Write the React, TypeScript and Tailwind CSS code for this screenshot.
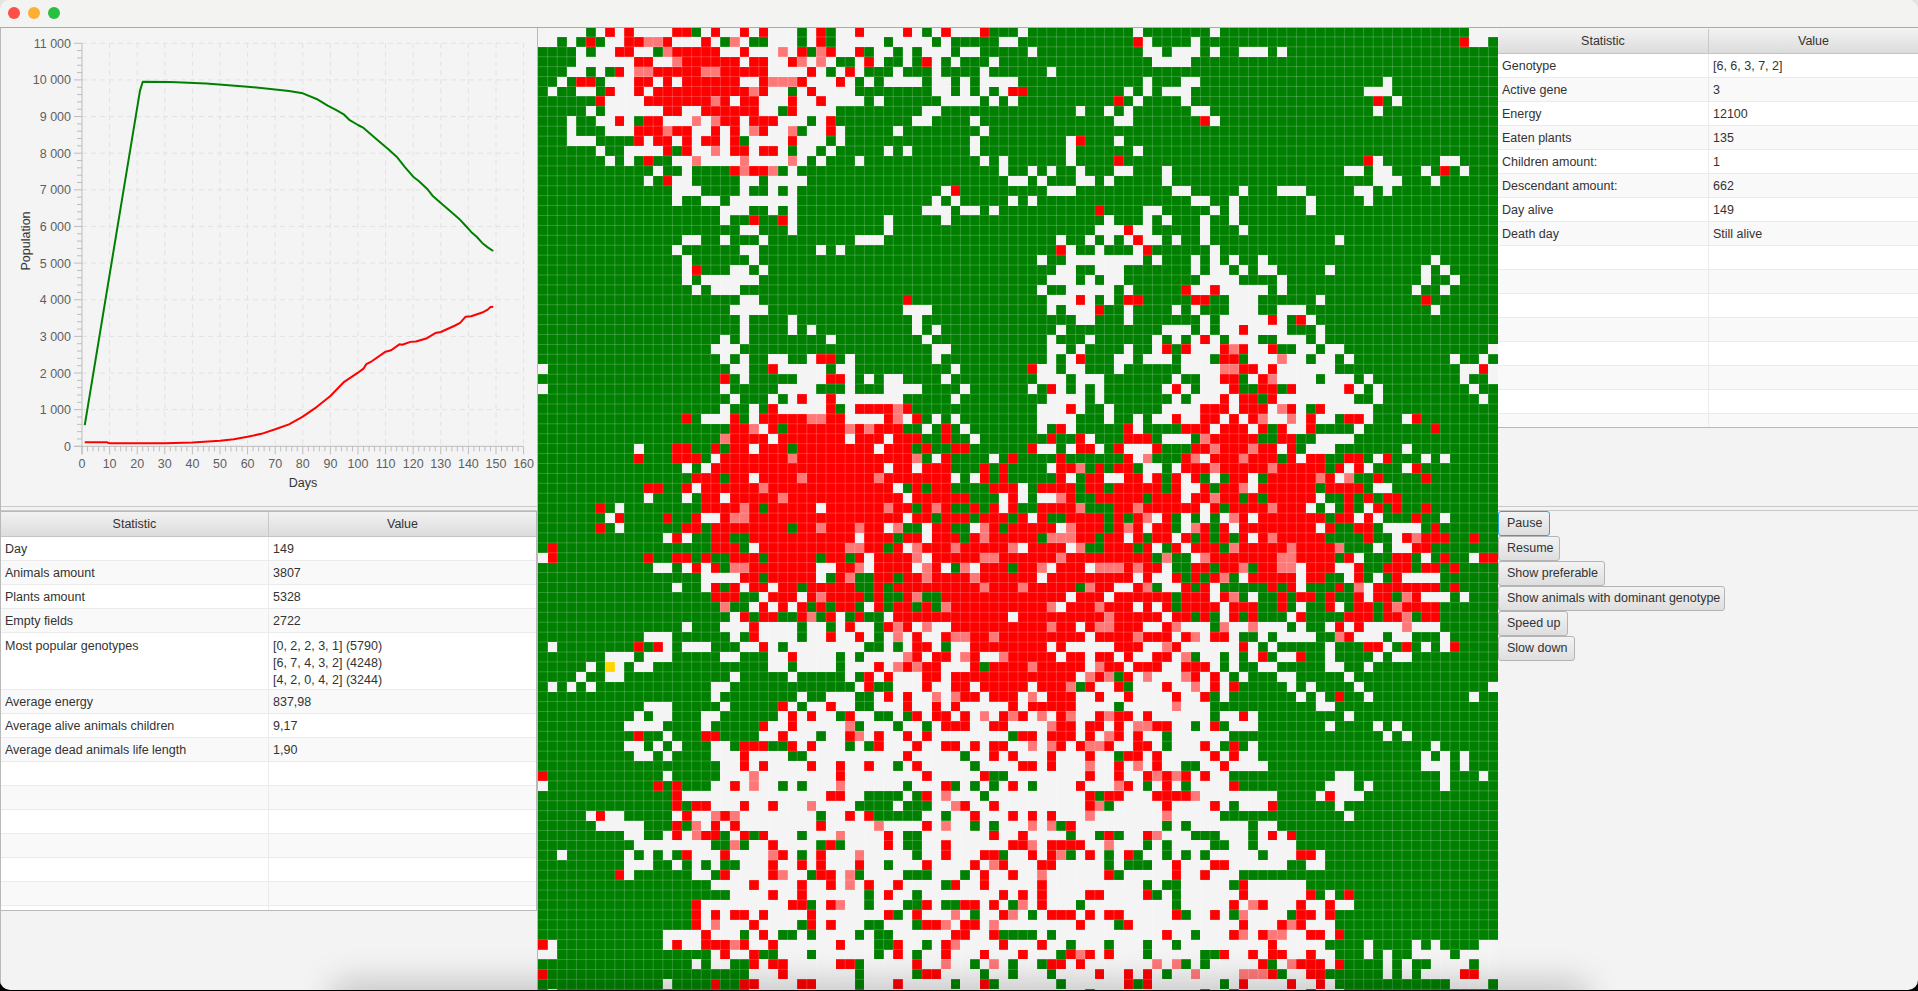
// . grass, _ desert, r animals, p weak animals, y selected animal
const LEFT_CELLS = [
  '_____._r_r____rr._r__r_r___._r.__r____r_._r___r...',
  '__._.r.__rrppr___r_.p_..___._r._____.____._.....__',
  '...._.__rr__.prrrrr__r___p_r.pr__r.__._.___.__....',
  '....______rr__prrrrrr_rr__rp_p_.._r_.._.r_._..._..',
  '...__._.r_pprrrrrpprrrrr____r_._r_..._..._...._...',
  '.._.rr.___rr_r_rrrrrr__rpppr___r_._.____.__._.____',
  '._..__.r__r_rrrrrrrrrrpr__._r____........__._._._r',
  '......r____rrrrrrrpr_rr___r__r____._......____._._',
  '....._.______rr__rrrrrr__.r____.........__........',
  '..._..__r_.rr___p_prr_rrr___._r........__...._....',
  '..._...___rrrprr__r_r_pr__p.__r_....._........_...',
  '...___....r_rr_r_rr_r.____r___._............._....',
  '......_..____r.r__p_rr_rr_.__._....._._......_....',
  '......._._.r..__p____p____p_._..._............_._.',
  '............_.._....rprrp._....................._.',
  '..........._.r__.....__.____....................._',
  '..............___...._.._._..............._r......',
  '.............._..__._______.............._._....._',
  '...................___.._._.............___.__._..',
  '..................._..r..r_........._....._.......',
  '.....................__..._........._.............',
  '...............__.._..._.........___..............',
  '.............._......__......_._..................',
  '..............._......_...........................',
  '..............._r...__._..........................',
  '..............._.______...........................',
  '................_.___.............................',
  '.....................__...............r...........',
  '....................____..............___.........',
  '....................._...._............_..........',
  '....................._...._._.........._._........',
  '..................._._........_........._.........',
  '..................___....................__.......',
  '..................._._..__.._rr._........_........',
  '_...................__..r_____.__.........._......',
  '...................r._.....___rr_._.__...._.......',
  '_.................._.....____..._...____...._.....',
  '...................._..._._r__r_______....._......',
  '..................._.._.r_____r._rrrrpr...........',
  '...............r.___r._rrrrrpprr____rp_r._._......',
  '....................rrp_r.rrrrrrprprrr.._.r._.....',
  '...................prrrr_rrrrrrr_rrr_rrr..r.._....',
  '.........._...rr..r.rr_rrr.rrrrrrrr_rrr.r..rr.....',
  '..........r...rrr._rrrrrrrprrrrrrrrrrrrp._r...._.r',
  '..............._._rrrrrrrrrrrrrrrrrr_rr_rrr...r.r.',
  '................rrr.rr_rrrrprrrrrrrprrrrrrr_._r.r.',
  '...........rr..r_rrrrrrprrrrrrrrrrrrr_.r.rr....rrr',
  '..........._..._.rr_rrrrrprrrrrrrrrrrr_rrrrrr..._rr',
  '......r._........rrrrpr.rrrrr_rrrrrrprr.rpr..r.r_r',
  '......._r....r..r__rpprrrrrrrrrrrrrrrr_rr.rrr.rrr.',
  '......r._......rr.rrrrrrrr.rrprrrprr_p.._rr.._pr.r',
  '............._r_..rr..rrrrrrrrrrr_rrr.rr_rrr.rprrr',
  '.r................rrr._rrrrrrrrrpprr.r_prrrprrrrrp',
  '_r.........r..rr.r..rrr.rrrrr.rr.r_rrrrp_rrrrrpprr',
  '............__._r_r.pprrrrrrr__rrp_rrrr_pr_.p_rrr.',
  '.................____rr.rrrrr_.rp..rr.rrprrrrprrrr',
  '.............._.._r.r_rr_rr.rrrrr..r.rrrrrrrrrprrr',
  '..................rrr.._rrr_rprrrr.r..rp..rrrrrrrr',
  '...................p.._r_r_r.r.rr._r.rr.r.prrrrrrr',
  '...................._r.rr..rp.r_.r.._rrrrrrrrrrrr_',
  '..............._...___r____.__._r__.rpr_p__rrrrrrr',
  '...........___......_.r____.__r__r_._p_r__rpprrprr',
  '._........r.r_.___...__r_.________.._._rr_.__rrrrr',
  '.......___.___.....__...__r____._.____pr_rr_pr__pr',
  '....._.y_.__............__.____.___r_prprr___r.rrr',
  '...._..__..........._....._....._.r_r___rr_rrrrrrr',
  '._._._............__............._r..___r__rr_rrrr',
  '.................._........_..___.._r_r__p_prr_rrr',
  '...........___....._.....r_.__r__..___r__r_r_____r',
  '.........._.__...__......_r_r__.r__.._.r_rr_r_p_rp',
  '.........____...._.....r__r_____p.___.__._rrr__rr_',
  '..........r.._...rr....__r___.__rp_r__r_r________.',
  '.........__._._...__.rrr..r_r___._.r___r__rr_r_rr_',
  '..........__._....___r____..__________r_____.__r_r',
  '...................__r_r____r__r__r__._r_____.____',
  'r............_.....___p________r________r_____r.._',
  '_...........r.r...__r_p__._.___p______.___r._._._r',
  '..............r_______________rr__...._.r_p___.___',
  '..............r.rr___r__r___p____...._...__pr__r__',
  '....._r__....._r__prp________.__r_r.....__.__r___r',
  '......_____...r.p_r_r________r_____p____r_p__._.__',
  '.........__.._r_prr._r.r___.___p____r_.._______r__',
  '..........________..p.__r____.r.____r_..__r______r',
  '.._......_._._.r___r____pr_._r___p_____.__r___rr._',
  '.........___.._._._..___r__r_r___r__.___r____r_pr_',
  '........r_......__.r____rp__.rr_p.____...___._r__r',
  '..................____r____r__r_p_r__r____.r__r___',
  '....................____r__r______._r__.________r_',
  '................r_________rr._rp__.___..r_..rr_r_.',
  '................r_r_rr_r____r_______r._r___p_.__rp',
  '................r_p___r____.r_r___..___.rrp_rr_p__',
  '.............____r___._r_.._.____._..______rr__r..',
  'r_..........._r__rrrpr__r______r___..r__._rp____r_',
  '__................_r__r..___.______._r_.__r___r___',
  '................_.__..r_rr_____rr._____r__p__._p_.',
  'r.....................___r_______._____.rr____.__.',
  '............._....r..rr____rr____.___r_____.__r.__',
  '._.........rr.........___________r________________',
]

const RIGHT_CELLS = [
  '_..........._......._..........................___',
  '............r_...._...........................r__.',
  '._...........__.___._..___._......................',
  '..............____................................',
  '..._..............................................',
  '............._...__..................._...........',
  'r.........._._.___..................___...........',
  '..........r._...._...................r._..........',
  '......_.._._......__................._............',
  '..........__.......r_.............................',
  '..................................................',
  '....._r..._.......................................',
  '....._......_.....................................',
  '....._....r.........................r_......__....',
  '._._.._...__..._..................__.__..._.r._...',
  '_._...__._....._.....................___..._......',
  '...___..........__....._...___.....__._...........',
  '._................__.._......._....._.............',
  '........r....__....._._......._...................',
  '........._..._._..._.._...........................',
  '........___r__....._..._..........................',
  '...._.._._._r__._.._............._................',
  '....r_.._..._r......_.............................',
  '.._..________._..._._._.._................._......',
  '....__..___......._.__._.__....._........._._.....',
  '...___._.__........____...._.............._.._....',
  '.._.._____._.....r__r_____._............._.._.....',
  '...___r_._.rr.....rr..___......_..........r.......',
  '..._.___r.._...._._...___..___............._......',
  '......__..._......._._____r_.r_...................',
  '...._..........___._.__r____..._..................',
  '..._..._......_._._r_.___..___._..................',
  '...__._...._.._r.r___rpr__r..__.__..............._',
  '..._._r...__.___.___.rr.___p__.__._.........._.._.',
  '.r__.__..._......____pprr_r______.............__r_',
  '..___.___......._..__rr._rp____.___._........._.._',
  '._.r_._._......_r_.___r..rr.r_____r_._........._..',
  '...____._......._.___r_rr.r________.._.........._.',
  '..___r_.._.....____rrr_rrr_pr_.r_____.............',
  '..____..._.._.__r__rr_r_rp__p_r__.rr_..._r........',
  '.._.r_.....r_....rrr_rrr_r.r__r...._.......r......',
  '...r..r_...rrr.___.prrrrr..rr..____...............',
  '.r__._rr_.r___r...rrprrrprr_r.___......._.........',
  '....r......r_p...rp_rrrprrr.r_rr..rr._r..._._.....',
  '..._rrp.r.rr.__._rrrprrrrrprrrrr.r_r_..._r........',
  '....r_.rr__rr_r.r_r._.rr_.rrrrrpr_p..r....r.......',
  '_.rrrr.rr.rrrrr.r__r.rrp_rrrrrr.rrrr.__...........',
  '_.__pr..rrrrr.rrr_rrprr.r.rrrrr_..r.r.rr..........',
  '..rrrrp...rrprrrrrr_r.rrrrprrr_._.r._r.r..r.......',
  'r_r..rrrr.r.rp_r._._._pr_rrrrrrr.rr_r_...r.._.....',
  'rrrr_prrr.rpr_rr._pr.r_rrrrrrrr_r..rr.____.r......',
  'rr.ppprr.rr_r.rr_r.r.r.r_rprrrrr....r.._rprrr..r..',
  '_rrrr_p..rrr.r_.r_rrr.prrrrrprrrrp..._.__rr.......',
  'rrrrprrrrrrrrr.p.._prrrrrrrpprrrr.r_...rr._.r.._rr',
  'rrp_rrr_ppprprr_..rr.rrp.rrpp_rrr__r..rrr.rr.r....',
  'rr_rrrrrrrrr_r__r.r.rp._rrrrr_rr.._r._.r____......',
  'prrrrr.prr__rp.__r.r_.....r.r_...r.p_rrrrrrr.r....',
  'rrrrr_rrr_rrrrrr.rrr_rp._..r.rr.r..r_rr.pr___._...',
  'rrrp_rrrprrr_r_r.rrrr_rrr..r._..r_.rr.rprrrr......',
  'rrrrrrrrrprrrrr_rr.r._r.r..._r....rrr.rrp.rr......',
  'rrrprr_rpprrr__rp___.p__p___._.._r_r____p___......',
  'rrrrrrr_rrrrprrr_rp_rr_.._.____..pr___.__..._.....',
  'rrr_r_____rrr__pr______r_._....._...rr_.r._._r....',
  'rrrr_rr_rr_r__rr_p.__._._r.__r.._...._.__.........',
  'rprrrrr_prr_rrr__rrr_._..__.....__.._.............',
  'rrrrrr_prp.r_p___pr_r_._...__....._...............',
  'r_rrrp.r__r.___r__p_r_r....._._...._............._',
  '_p_rrr__r__r____r__r._......._._.r.._.........._..',
  '_rrrrr____._____p___...........__.................',
  'r_p_rp__rprr_r______.__r_........._...............',
  '___prr_rr_r_pprr__._r.___......._...._._..........',
  'rr_rrr_r_pr_r__.______................_._.........',
  '_p_pr_rppr__rr_.___r_.r._.................._......',
  '___r___r__.rr_r_____r_r__................._._._...',
  'rr_r___p__r_p_r__..__r____................___._..',
  '_______r__r__rprpr_r__...........__........._..._.',
  '_.____r___pr_._r_.____r.........___._......._.....',
  '_______r.rr___rrrrp________...._r___..............',
  '_______rp._____r____r_.___r......_................',
  '_r_r___p_______p_____............._...............',
  '_p_p.r_________._.______.__.......................',
  'r____.__.r.__rp___...___._r_r.....................',
  'rp_rrrr__p___._.____..__.____.....................',
  '_r_rp._r_._r.__._._._____.___rr_..................',
  '__rr_____._...__r___rr______..__..................',
  '__p______r._____r__r___...........................',
  '__r__________._.._____.r______....................',
  'r_r____rr____r._.______r______r._.r...............',
  'p_r___._________._____r_pr___r__r__...............',
  '_._rrr_r_rr_____r.__r_.p____.rr_r.................',
  '______r___.r___________r___rpr___.................',
  '.._.___________r__.___rp_rpp__rr_r................',
  '__r__.___.___.__._________r_____...._...._._....__',
  'r___.rpr_r___._____..r__r_rr__r__..._._..____.____',
  '__.rr_r_______p_p._._____r._prrr_r...._._..____.__',
  '___.____r__r_r_.__p____pppr.__rr......_._.____rr__',
  '____.______r.r_______._r____r__r_............____.',
  '_______r___________r__r_______r___................',
]

const CELL_COLORS: Record<string, string> = {
  '.': '#008000',
  _: '#f4f4f4',
  r: '#ff0000',
  p: '#ff7878',
  y: '#ffd500',
}

const CELL_W = 9.6
const CELL_H = 9.92

function WorldMap() {
  const rects: React.ReactNode[] = []
  LEFT_CELLS.forEach((left, y) => {
    const row = left.padEnd(50, '.').slice(0, 50) + (RIGHT_CELLS[y] ?? '').padEnd(50, '.').slice(0, 50)
    let start = 0
    for (let x = 1; x <= 100; x++) {
      if (x === 100 || row[x] !== row[start]) {
        rects.push(
          <rect
            key={`${y}-${start}`}
            x={start * CELL_W}
            y={y * CELL_H}
            width={(x - start) * CELL_W}
            height={CELL_H}
            fill={CELL_COLORS[row[start]]}
          />,
        )
        start = x
      }
    }
  })

  return (
    <svg className="block" width={960} height={963} viewBox="0 1 960 963">
      <g shapeRendering="crispEdges">{rects}</g>
      <g stroke="#ffffff" strokeOpacity={0.2} strokeWidth={1}>
        {Array.from({ length: 99 }, (_, i) => (
          <line key={i} x1={(i + 1) * CELL_W} x2={(i + 1) * CELL_W} y1={0} y2={965} />
        ))}
        {Array.from({ length: 98 }, (_, i) => (
          <line key={i} y1={(i + 1) * CELL_H} y2={(i + 1) * CELL_H} x1={0} x2={960} />
        ))}
      </g>
    </svg>
  )
}

const PLANTS: [number, number][] = [
  [1, 580], [21, 9700], [22, 9950], [32, 9940], [45, 9900], [60, 9815], [70, 9740], [75, 9700], [80, 9634],
  [85, 9480], [89, 9296], [92, 9180], [95, 9050], [97, 8900], [100, 8769], [102, 8690], [104, 8560], [108, 8300],
  [111, 8110], [114, 7904], [117, 7620], [120, 7358], [122, 7240], [125, 7030], [127, 6840], [130, 6640],
  [132, 6510], [134, 6380], [137, 6180], [139, 6020], [141, 5850], [143, 5720], [145, 5550], [147, 5430], [149, 5330],
]

const ANIMALS: [number, number][] = [
  [1, 110], [9, 110], [10, 80], [30, 85], [40, 105], [50, 150], [55, 190], [60, 262], [65, 340], [70, 464],
  [75, 600], [80, 808], [85, 1070], [90, 1373], [95, 1760], [100, 2009], [102, 2120], [103, 2240], [105, 2320],
  [110, 2582], [112, 2620], [115, 2783], [116, 2770], [119, 2850], [121, 2860], [125, 2950], [128, 3090],
  [130, 3120], [135, 3290], [137, 3370], [139, 3537], [141, 3550], [145, 3650], [147, 3730], [148, 3800],
  [149, 3807],
]

const plotX = (day: number) => 82 + day * 2.76
const plotY = (value: number) => 446.3 - value * 0.03664
const linePoints = (data: [number, number][]) => data.map(([d, v]) => `${plotX(d)},${plotY(v)}`).join(' ')
const formatThousands = (v: number) => (v >= 1000 ? `${Math.floor(v / 1000)} ${String(v % 1000).padStart(3, '0')}` : String(v))

function PopulationChart() {
  const xMajor = Array.from({ length: 17 }, (_, i) => i * 10)
  const yMajor = Array.from({ length: 12 }, (_, i) => i * 1000)
  const xMinor = Array.from({ length: 81 }, (_, i) => i * 2).filter((d) => d % 10 !== 0)
  const yMinor = Array.from({ length: 56 }, (_, i) => i * 200).filter((v) => v % 1000 !== 0)

  return (
    <svg className="block" width={536} height={478} viewBox="1 28 536 478">
      <g stroke="#e2e2e2" strokeWidth={1} strokeDasharray="5 4">
        {xMajor.slice(1).map((d) => (
          <line key={d} x1={plotX(d)} x2={plotX(d)} y1={plotY(11000)} y2={plotY(0)} />
        ))}
        {yMajor.slice(1).map((v) => (
          <line key={v} x1={plotX(0)} x2={plotX(160)} y1={plotY(v)} y2={plotY(v)} />
        ))}
      </g>
      <g stroke="#bdbdbd" strokeWidth={1}>
        <line x1={plotX(0)} x2={plotX(0)} y1={plotY(11000)} y2={plotY(0) + 8} />
        <line x1={plotX(0) - 8} x2={plotX(160)} y1={plotY(0)} y2={plotY(0)} />
        {xMajor.map((d) => (
          <line key={d} x1={plotX(d)} x2={plotX(d)} y1={plotY(0)} y2={plotY(0) + 8} />
        ))}
        {xMinor.map((d) => (
          <line key={d} x1={plotX(d)} x2={plotX(d)} y1={plotY(0)} y2={plotY(0) + 5} />
        ))}
        {yMajor.map((v) => (
          <line key={v} x1={plotX(0) - 8} x2={plotX(0)} y1={plotY(v)} y2={plotY(v)} />
        ))}
        {yMinor.map((v) => (
          <line key={v} x1={plotX(0) - 5} x2={plotX(0)} y1={plotY(v)} y2={plotY(v)} />
        ))}
      </g>
      <polyline points={linePoints(PLANTS)} fill="none" stroke="#008000" strokeWidth={2} strokeLinejoin="round" />
      <polyline points={linePoints(ANIMALS)} fill="none" stroke="#ff0000" strokeWidth={2} strokeLinejoin="round" />
      <g fill="#5f5f5f" fontSize={12.5}>
        {yMajor.map((v) => (
          <text key={v} x={71} y={plotY(v) + 4.5} textAnchor="end">
            {formatThousands(v)}
          </text>
        ))}
        {xMajor.map((d) => (
          <text key={d} x={plotX(d)} y={468} textAnchor="middle">
            {d}
          </text>
        ))}
      </g>
      <g fill="#333333" fontSize={12.5}>
        <text x={303} y={487} textAnchor="middle">
          Days
        </text>
        <text transform="translate(30 241) rotate(-90)" textAnchor="middle">
          Population
        </text>
      </g>
    </svg>
  )
}

type Row = { name: string; value: string; tall?: boolean }

function StatsTable({ rows, blanks, gridClass, className }: { rows: Row[]; blanks: number; gridClass: string; className: string }) {
  const allRows: Row[] = [...rows, ...Array.from({ length: blanks }, () => ({ name: '', value: '' }))]

  return (
    <div className={`flex flex-col overflow-hidden text-[12.5px] text-[#333] ${className}`}>
      <div className={`grid h-[25px] shrink-0 border-b border-[#c4c4c4] bg-linear-to-b from-[#f2f2f2] to-[#dcdcdc] ${gridClass}`}>
        <div className="border-r border-[#c8c8c8] text-center leading-[25px]">Statistic</div>
        <div className="text-center leading-[25px]">Value</div>
      </div>
      {allRows.map((row, i) => (
        <div
          key={i}
          className={`grid shrink-0 border-b border-[#ebebeb] ${row.tall ? 'h-[57px]' : 'h-[24px]'} ${i % 2 ? 'bg-[#f9f9f9]' : 'bg-white'} ${gridClass}`}
        >
          <div className={`border-r border-[#ebebeb] px-[4px] ${row.tall ? 'leading-[27px]' : 'leading-[25px]'}`}>{row.name}</div>
          <div className={`whitespace-pre-line px-[4px] ${row.tall ? 'pt-[5px] leading-[17px]' : 'leading-[25px]'}`}>{row.value}</div>
        </div>
      ))}
    </div>
  )
}

const GLOBAL_STATS: Row[] = [
  { name: 'Day', value: '149' },
  { name: 'Animals amount', value: '3807' },
  { name: 'Plants amount', value: '5328' },
  { name: 'Empty fields', value: '2722' },
  { name: 'Most popular genotypes', value: '[0, 2, 2, 3, 1] (5790)\n[6, 7, 4, 3, 2] (4248)\n[4, 2, 0, 4, 2] (3244)', tall: true },
  { name: 'Average energy', value: '837,98' },
  { name: 'Average alive animals children', value: '9,17' },
  { name: 'Average dead animals life length', value: '1,90' },
]

const ANIMAL_STATS: Row[] = [
  { name: 'Genotype', value: '[6, 6, 3, 7, 2]' },
  { name: 'Active gene', value: '3' },
  { name: 'Energy', value: '12100' },
  { name: 'Eaten plants', value: '135' },
  { name: 'Children amount:', value: '1' },
  { name: 'Descendant amount:', value: '662' },
  { name: 'Day alive', value: '149' },
  { name: 'Death day', value: 'Still alive' },
]

function ControlButton({ label, width, focused }: { label: string; width: string; focused?: boolean }) {
  return (
    <button
      type="button"
      className={`h-[24.5px] whitespace-nowrap rounded-[3px] border bg-linear-to-b from-[#f3f3f3] to-[#dedede] pl-[8px] text-left text-[12.5px] leading-[22px] text-[#333] ${width} ${
        focused ? 'border-[#2aa5de]' : 'border-[#b4b4b4]'
      }`}
    >
      {label}
    </button>
  )
}

function SplitDivider() {
  return <div className="h-[5px] shrink-0 border-y border-[#c9c9c9] bg-[#f3f3f3]" />
}

export default function App() {
  return (
    <div className="relative h-[991px] w-[1918px] overflow-hidden bg-linear-to-b from-[#e4e4e4] from-50% to-black to-50% font-['Liberation_Sans',sans-serif]">
      <div className="relative flex h-[990px] flex-col overflow-hidden rounded-[10px] bg-[#f3f3f3]">
        <div className="flex h-[28px] shrink-0 items-center gap-[8px] border-b border-[#ababab] bg-[#f3f3f1] pb-[2px] pl-[7.5px]">
          <span className="h-[12px] w-[12px] rounded-full bg-[#ff4d4a]" />
          <span className="h-[12px] w-[12px] rounded-full bg-[#ffae30]" />
          <span className="h-[12px] w-[12px] rounded-full bg-[#28c041]" />
        </div>

        <div className="flex min-h-0 flex-1">
          <div className="flex w-[538px] shrink-0 flex-col border-x border-[#b9b9b9]">
            <div className="h-[478px] shrink-0 bg-[#f4f4f4]">
              <PopulationChart />
            </div>
            <SplitDivider />
            <StatsTable
              rows={GLOBAL_STATS}
              blanks={7}
              gridClass="grid-cols-[268px_1fr]"
              className="h-[400px] shrink-0 border-y border-r border-[#b9b9b9]"
            />
          </div>

          <div className="w-[960px] shrink-0 overflow-hidden">
            <WorldMap />
          </div>

          <div className="flex min-w-0 flex-1 flex-col">
            <StatsTable
              rows={ANIMAL_STATS}
              blanks={8}
              gridClass="grid-cols-[211px_1fr]"
              className="h-[400px] shrink-0 border-b border-[#b9b9b9] pt-px"
            />
            <div className="h-[78px] shrink-0" />
            <SplitDivider />
            <div className="flex flex-col items-start gap-[0.5px]">
              <ControlButton label="Pause" width="w-[52px]" focused />
              <ControlButton label="Resume" width="w-[62px]" />
              <ControlButton label="Show preferable" width="w-[107px]" />
              <ControlButton label="Show animals with dominant genotype" width="w-[227px]" />
              <ControlButton label="Speed up" width="w-[70px]" />
              <ControlButton label="Slow down" width="w-[77px]" />
            </div>
          </div>
        </div>

        <div className="pointer-events-none absolute bottom-[-26px] left-[330px] h-[34px] w-[1260px] rounded-full bg-black/20 blur-[16px]" />
      </div>
    </div>
  )
}
